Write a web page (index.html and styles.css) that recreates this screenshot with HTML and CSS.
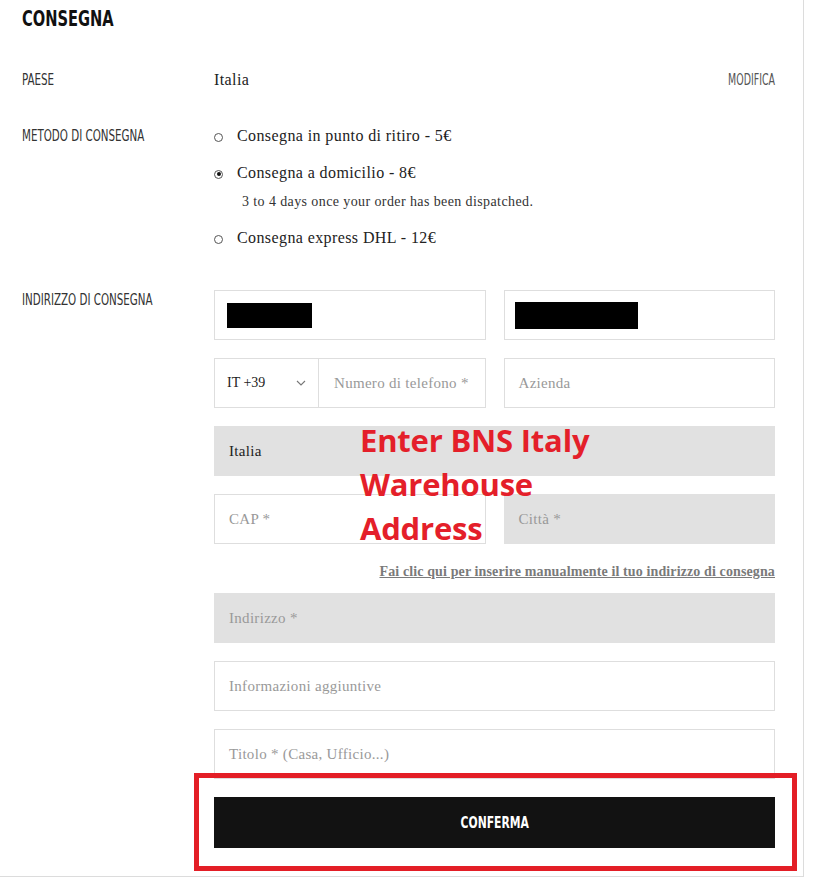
FILE: index.html
```html
<!DOCTYPE html>
<html>
<head>
<meta charset="utf-8">
<link rel="stylesheet" href="styles.css">
</head>
<body>
<div class="panel">
  <h1 class="title"><span>CONSEGNA</span></h1>

  <div class="row row-country">
    <div class="label"><span>PAESE</span></div>
    <div class="value country">
      <span class="serif">Italia</span>
      <span class="edit">MODIFICA</span>
    </div>
  </div>

  <div class="row row-method">
    <div class="label"><span>METODO DI CONSEGNA</span></div>
    <div class="value options">
      <div class="opt"><span class="radio"></span>Consegna in punto di ritiro - 5€</div>
      <div class="opt opt2"><span class="radio checked"></span>Consegna a domicilio - 8€</div>
      <div class="sub">3 to 4 days once your order has been dispatched.</div>
      <div class="opt opt3"><span class="radio"></span>Consegna express DHL - 12€</div>
    </div>
  </div>

  <div class="row row-address">
    <div class="label"><span>INDIRIZZO DI CONSEGNA</span></div>
    <div class="value form">
      <div class="pair">
        <div class="field"><span class="redact r1"></span></div>
        <div class="field"><span class="redact r2"></span></div>
      </div>
      <div class="pair">
        <div class="field phone">
          <div class="prefix">IT +39
            <svg class="chev" width="10" height="6" viewBox="0 0 10 6"><path d="M1 1 L5 5 L9 1" fill="none" stroke="#777" stroke-width="1.1"/></svg>
          </div>
          <div class="num ph">Numero di telefono *</div>
        </div>
        <div class="field ph">Azienda</div>
      </div>
      <div class="field gray">Italia</div>
      <div class="pair">
        <div class="field ph">CAP *</div>
        <div class="field gray ph">Città *</div>
      </div>
      <div class="manual"><a>Fai clic qui per inserire manualmente il tuo indirizzo di consegna</a></div>
      <div class="field gray ph">Indirizzo *</div>
      <div class="field ph">Informazioni aggiuntive</div>
      <div class="field ph">Titolo * (Casa, Ufficio...)</div>
      <button class="confirm"><span>CONFERMA</span></button>
    </div>
  </div>

  <div class="note">Enter BNS Italy<br>Warehouse<br>Address</div>
  <div class="highlight"></div>
</div>
</body>
</html>
```
FILE: styles.css
```css
html, body {
  margin: 0;
  padding: 0;
  background: #fff;
}

.panel {
  position: relative;
  width: 804px;
  height: 877px;
  box-sizing: border-box;
  border-right: 1px solid #dcdcdc;
  border-bottom: 1px solid #dcdcdc;
  padding: 0 28px 0 22px;
  font-family: "Liberation Serif", serif;
  color: #222;
}

.title {
  margin: 0;
  padding-top: 6px;
  height: 26px;
  font-family: "DejaVu Sans Condensed", "DejaVu Sans", sans-serif;
  font-stretch: condensed;
  font-weight: bold;
  font-size: 22px;
  line-height: 26px;
  color: #111;
}

.title span,
.label span,
.edit,
.confirm span {
  display: inline-block;
  transform-origin: left center;
}

.title span {
  transform: scaleX(0.74);
}

.row {
  display: grid;
  grid-template-columns: 192px 1fr;
}

.label {
  font-family: "DejaVu Sans Condensed", "DejaVu Sans", sans-serif;
  font-stretch: condensed;
  font-size: 15.5px;
  line-height: 20px;
  color: #333;
  white-space: nowrap;
}

.label span {
  transform: scaleX(0.74);
}

.row-country {
  margin-top: 38px;
}

.country {
  display: flex;
  justify-content: space-between;
  line-height: 20px;
  font-size: 16px;
  letter-spacing: 0.4px;
}

.edit {
  font-family: "DejaVu Sans Condensed", "DejaVu Sans", sans-serif;
  font-stretch: condensed;
  font-size: 15px;
  letter-spacing: 0;
  color: #555;
  transform: scaleX(0.7);
  transform-origin: right center;
}

.row-method {
  margin-top: 36px;
}

.options {
  display: flex;
  flex-direction: column;
}

.opt {
  display: flex;
  align-items: center;
  font-size: 16px;
  letter-spacing: 0.4px;
  line-height: 20px;
  color: #222;
}

.opt2 {
  margin-top: 17px;
}

.opt3 {
  margin-top: 18px;
}

.radio {
  width: 9px;
  height: 9px;
  border: 1px solid #555;
  border-radius: 50%;
  box-sizing: border-box;
  margin-right: 14px;
  position: relative;
  top: 1px;
  flex: none;
}

.radio.checked::after {
  content: "";
  position: absolute;
  left: 1.5px;
  top: 1.5px;
  width: 4px;
  height: 4px;
  border-radius: 50%;
  background: #111;
}

.sub {
  margin-top: 11px;
  padding-left: 28px;
  font-size: 14px;
  letter-spacing: 0.4px;
  line-height: 16px;
  color: #333;
}

.row-address {
  margin-top: 42px;
}

.form {
  display: flex;
  flex-direction: column;
  gap: 18px;
}

.pair {
  display: grid;
  grid-template-columns: 1fr 1fr;
  gap: 18px;
}

.field {
  height: 50px;
  box-sizing: border-box;
  border: 1px solid #dedede;
  padding: 0 14px;
  display: flex;
  align-items: center;
  font-size: 15px;
  letter-spacing: 0.3px;
  color: #222;
  background: #fff;
}

.field.gray {
  background: #e1e1e1;
  border-color: #e1e1e1;
}

.ph,
.field .ph {
  color: #999;
}

.redact {
  display: block;
  background: #000;
  height: 25px;
}

.r1 {
  width: 85px;
  margin-left: -2px;
}

.r2 {
  width: 123px;
  margin-left: -4px;
  height: 27px;
}

.phone {
  padding: 0;
}

.prefix {
  width: 104px;
  height: 100%;
  box-sizing: border-box;
  border-right: 1px solid #dedede;
  padding: 0 12px;
  display: flex;
  align-items: center;
  justify-content: space-between;
  font-size: 14px;
  letter-spacing: 0;
  color: #222;
}

.num {
  padding-left: 15px;
}

.manual {
  margin-top: 2px;
  margin-bottom: -5px;
  text-align: right;
  font-size: 14px;
  letter-spacing: 0.12px;
  line-height: 16px;
  font-weight: bold;
}

.manual a {
  color: #7a7a7a;
  text-decoration: underline;
}

.confirm {
  height: 51px;
  border: none;
  background: #121212;
  color: #fff;
  font-family: "DejaVu Sans Condensed", "DejaVu Sans", sans-serif;
  font-stretch: condensed;
  font-weight: bold;
  font-size: 15px;
  cursor: pointer;
}

.confirm span {
  transform: scaleX(0.8);
  transform-origin: center center;
}

.note {
  position: absolute;
  left: 360px;
  top: 418px;
  font-family: "Open Sans", sans-serif;
  font-weight: bold;
  font-size: 31px;
  line-height: 44px;
  letter-spacing: -0.2px;
  color: #e41f2a;
}

.highlight {
  position: absolute;
  left: 194px;
  top: 773px;
  width: 603px;
  height: 98px;
  box-sizing: border-box;
  border: 5px solid #e31e26;
}
```
